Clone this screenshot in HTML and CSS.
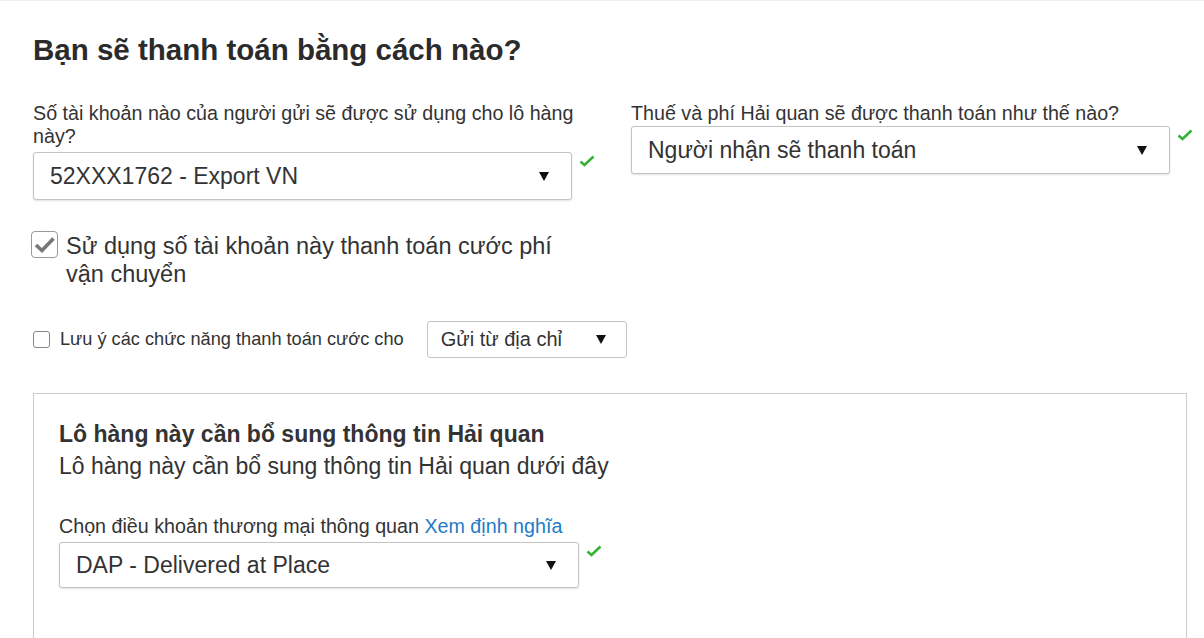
FILE: index.html
```html
<!DOCTYPE html>
<html lang="vi">
<head>
  <meta charset="UTF-8">
  <title>Thanh toán</title>
  <link rel="stylesheet" href="styles.css">
</head>
<body>
  <div class="page">
    <h1 class="title">Bạn sẽ thanh toán bằng cách nào?</h1>

    <div class="cols">
      <div class="field">
        <label class="label">Số tài khoản nào của người gửi sẽ được sử dụng cho lô hàng này?</label>
        <div class="row">
          <div class="select">
            <span>52XXX1762 - Export VN</span>
            <i class="arrow"></i>
          </div>
          <svg class="ok" width="16" height="12" viewBox="0 0 16 12"><path d="M1.5 6.5 L5.5 10 L14.5 1.5" fill="none" stroke="#36b336" stroke-width="2.6"/></svg>
        </div>
      </div>
      <div class="field">
        <label class="label one">Thuế và phí Hải quan sẽ được thanh toán như thế nào?</label>
        <div class="row">
          <div class="select">
            <span>Người nhận sẽ thanh toán</span>
            <i class="arrow"></i>
          </div>
          <svg class="ok" width="16" height="12" viewBox="0 0 16 12"><path d="M1.5 6.5 L5.5 10 L14.5 1.5" fill="none" stroke="#36b336" stroke-width="2.6"/></svg>
        </div>
      </div>
    </div>

    <div class="check-big">
      <span class="box checked">
        <svg width="21" height="17" viewBox="0 0 21 17"><path d="M2 9 L8 14.5 L19.5 2.5" fill="none" stroke="#777" stroke-width="3.6"/></svg>
      </span>
      <span class="check-text">Sử dụng số tài khoản này thanh toán cước phí vận chuyển</span>
    </div>

    <div class="check-small">
      <span class="box small"></span>
      <span class="small-text">Lưu ý các chức năng thanh toán cước cho</span>
      <div class="select mini">
        <span>Gửi từ địa chỉ</span>
        <i class="arrow"></i>
      </div>
    </div>

    <div class="customs">
      <h2 class="customs-title">Lô hàng này cần bổ sung thông tin Hải quan</h2>
      <p class="customs-sub">Lô hàng này cần bổ sung thông tin Hải quan dưới đây</p>
      <label class="label one">Chọn điều khoản thương mại thông quan <a href="#">Xem định nghĩa</a></label>
      <div class="row">
        <div class="select terms">
          <span>DAP - Delivered at Place</span>
          <i class="arrow"></i>
        </div>
        <svg class="ok" width="16" height="12" viewBox="0 0 16 12"><path d="M1.5 6.5 L5.5 10 L14.5 1.5" fill="none" stroke="#36b336" stroke-width="2.6"/></svg>
      </div>
    </div>
  </div>
</body>
</html>
```

FILE: styles.css
```css
body {
  margin: 0;
  font-family: "Liberation Sans", Arial, sans-serif;
  color: #333;
  background: #fff;
  border-top: 1px solid #eee;
}

.page {
  padding: 32px 0 0 33px;
}

.title {
  margin: 0;
  font-size: 29.5px;
  line-height: 34px;
  font-weight: bold;
  color: #2b2b2b;
}

.cols {
  display: grid;
  grid-template-columns: 598px 598px;
  margin-top: 35px;
}

.label {
  display: block;
  font-size: 19.7px;
  line-height: 23px;
  width: 560px;
  color: #333;
}

.label a {
  color: #1f7bc7;
  text-decoration: none;
}

.row {
  display: flex;
  align-items: flex-start;
}

.field .label {
  margin-bottom: 4px;
}

.field .label.one {
  margin-bottom: 1px;
}

.select {
  box-sizing: border-box;
  width: 539px;
  height: 48px;
  border: 1px solid #c4c4c4;
  border-radius: 3px;
  box-shadow: 0 1px 2px rgba(0, 0, 0, 0.12);
  background: #fff;
  display: flex;
  align-items: center;
  justify-content: space-between;
  padding: 0 22px 0 16px;
  font-size: 23px;
  color: #333;
}

.arrow {
  width: 0;
  height: 0;
  border-left: 5px solid transparent;
  border-right: 5px solid transparent;
  border-top: 9px solid #111;
}

.ok {
  margin: 3px 0 0 7px;
}

.check-big {
  display: flex;
  align-items: flex-start;
  margin-top: 31px;
  margin-left: -2px;
}

.box {
  box-sizing: border-box;
  flex: none;
  border: 1px solid #999;
  border-radius: 4px;
  background: #fff;
  display: flex;
  align-items: center;
  justify-content: center;
}

.box.checked {
  width: 27px;
  height: 27px;
}

.check-text {
  margin-left: 8px;
  width: 500px;
  font-size: 23.5px;
  line-height: 28px;
  margin-top: 1px;
}

.check-small {
  display: flex;
  align-items: center;
  margin-top: 33px;
}

.box.small {
  width: 17px;
  height: 17px;
  border-radius: 3px;
  border-color: #888;
}

.small-text {
  margin-left: 10px;
  font-size: 18.2px;
}

.select.mini {
  width: 200px;
  height: 37px;
  margin-left: 23px;
  font-size: 20px;
  padding: 0 20px 0 13px;
  box-shadow: none;
}

.customs {
  margin-top: 35px;
  width: 1154px;
  box-sizing: border-box;
  border: 1px solid #ccc;
  border-bottom: none;
  padding: 26px 25px 60px;
}

.customs-title {
  margin: 0;
  font-size: 23px;
  line-height: 28px;
  font-weight: bold;
}

.customs-sub {
  margin: 4px 0 0;
  font-size: 23px;
  line-height: 28px;
}

.customs .label {
  margin-top: 35px;
  margin-bottom: 4px;
}

.select.terms {
  width: 520px;
  height: 46px;
}
```
